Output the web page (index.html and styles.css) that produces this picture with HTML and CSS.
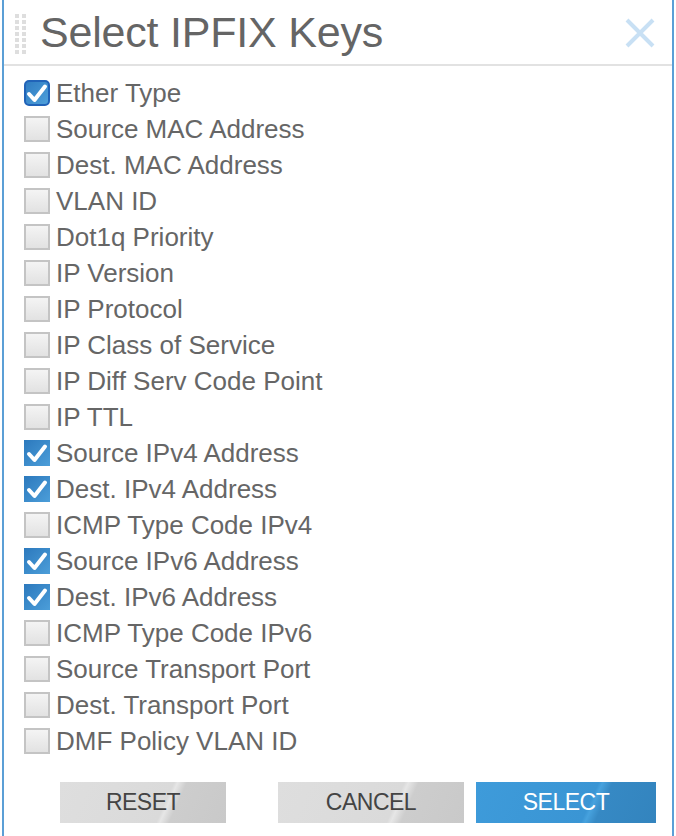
FILE: index.html
```html
<!DOCTYPE html>
<html lang="en">
<head>
  <meta charset="UTF-8">
  <title>Select IPFIX Keys</title>
  <link rel="stylesheet" href="styles.css">
</head>
<body>
  <div class="dialog">
    <header class="dialog-header">
      <svg class="grip" width="12" height="40" viewBox="0 0 12 40">
        <g fill="#dedede">
          <rect x="0" y="0" width="4" height="4"/><rect x="7" y="0" width="4" height="4"/>
          <rect x="0" y="6" width="4" height="4"/><rect x="7" y="6" width="4" height="4"/>
          <rect x="0" y="12" width="4" height="4"/><rect x="7" y="12" width="4" height="4"/>
          <rect x="0" y="18" width="4" height="4"/><rect x="7" y="18" width="4" height="4"/>
          <rect x="0" y="24" width="4" height="4"/><rect x="7" y="24" width="4" height="4"/>
          <rect x="0" y="30" width="4" height="4"/><rect x="7" y="30" width="4" height="4"/>
          <rect x="0" y="36" width="4" height="4"/><rect x="7" y="36" width="4" height="4"/>
        </g>
      </svg>
      <h1>Select IPFIX Keys</h1>
      <svg class="close-btn" width="32" height="32" viewBox="0 0 32 32">
        <path d="M3 3 L29 29 M29 3 L3 29" stroke="#c8e0f4" stroke-width="4" fill="none"/>
      </svg>
    </header>

    <ul class="key-list">
      <li class="key"><span class="box checked focus"><svg viewBox="0 0 26 26"><path d="M5 14 L10.5 20 L21 6.5" stroke="#fff" stroke-width="4" fill="none" stroke-linecap="round" stroke-linejoin="round"/></svg></span>Ether Type</li>
      <li class="key"><span class="box"></span>Source MAC Address</li>
      <li class="key"><span class="box"></span>Dest. MAC Address</li>
      <li class="key"><span class="box"></span>VLAN ID</li>
      <li class="key"><span class="box"></span>Dot1q Priority</li>
      <li class="key"><span class="box"></span>IP Version</li>
      <li class="key"><span class="box"></span>IP Protocol</li>
      <li class="key"><span class="box"></span>IP Class of Service</li>
      <li class="key"><span class="box"></span>IP Diff Serv Code Point</li>
      <li class="key"><span class="box"></span>IP TTL</li>
      <li class="key"><span class="box checked"><svg viewBox="0 0 26 26"><path d="M5 14 L10.5 20 L21 6.5" stroke="#fff" stroke-width="4" fill="none" stroke-linecap="round" stroke-linejoin="round"/></svg></span>Source IPv4 Address</li>
      <li class="key"><span class="box checked"><svg viewBox="0 0 26 26"><path d="M5 14 L10.5 20 L21 6.5" stroke="#fff" stroke-width="4" fill="none" stroke-linecap="round" stroke-linejoin="round"/></svg></span>Dest. IPv4 Address</li>
      <li class="key"><span class="box"></span>ICMP Type Code IPv4</li>
      <li class="key"><span class="box checked"><svg viewBox="0 0 26 26"><path d="M5 14 L10.5 20 L21 6.5" stroke="#fff" stroke-width="4" fill="none" stroke-linecap="round" stroke-linejoin="round"/></svg></span>Source IPv6 Address</li>
      <li class="key"><span class="box checked"><svg viewBox="0 0 26 26"><path d="M5 14 L10.5 20 L21 6.5" stroke="#fff" stroke-width="4" fill="none" stroke-linecap="round" stroke-linejoin="round"/></svg></span>Dest. IPv6 Address</li>
      <li class="key"><span class="box"></span>ICMP Type Code IPv6</li>
      <li class="key"><span class="box"></span>Source Transport Port</li>
      <li class="key"><span class="box"></span>Dest. Transport Port</li>
      <li class="key"><span class="box"></span>DMF Policy VLAN ID</li>
    </ul>

    <footer class="dialog-footer">
      <button class="btn btn-reset">RESET</button>
      <button class="btn btn-cancel">CANCEL</button>
      <button class="btn btn-select">SELECT</button>
    </footer>
  </div>
</body>
</html>
```

FILE: styles.css
```css
* {
  margin: 0;
  padding: 0;
  box-sizing: border-box;
}

body {
  font-family: 'Liberation Sans', Arial, sans-serif;
  background: #fff;
  color: #666;
}

.dialog {
  margin: 0 2px;
  height: 836px;
  border-left: 2px solid #5b9fd6;
  border-right: 2px solid #5b9fd6;
  background: #fff;
}

.dialog-header {
  display: flex;
  align-items: center;
  height: 66px;
  padding: 0 16px 0 11px;
  border-bottom: 2px solid #e2e2e2;
}

.grip {
  flex: none;
  margin-top: 4px;
}

.dialog-header h1 {
  flex: 1;
  margin-left: 13px;
  font-size: 43px;
  font-weight: normal;
  color: #656565;
  letter-spacing: -0.2px;
}

.close-btn {
  flex: none;
  margin-top: 1px;
}

.key-list {
  list-style: none;
  padding: 9px 0 0 20px;
}

.key {
  display: flex;
  align-items: center;
  height: 36px;
  font-size: 26px;
  color: #666;
}

.box {
  flex: none;
  width: 26px;
  height: 26px;
  margin-right: 6px;
  border: 2px solid #c4c4c4;
  background: linear-gradient(#f4f4f4, #e2e2e2);
}

.box svg {
  display: block;
  width: 100%;
  height: 100%;
}

.box.checked {
  border: none;
  background: linear-gradient(135deg, #2c79bd, #4c9ed9);
}

.box.focus {
  border: 2px solid #2163b8;
  border-radius: 5px;
  background: linear-gradient(135deg, #2f7cc2, #4fa0da);
}

.box.focus svg {
  margin: -2px;
  width: 26px;
  height: 26px;
}

.dialog-footer {
  display: flex;
  padding: 23px 0 0 56px;
}

.btn {
  height: 41px;
  border: none;
  font-family: 'Liberation Sans', Arial, sans-serif;
  font-size: 23px;
  color: #444;
  letter-spacing: -0.5px;
  background: linear-gradient(114deg, #dedede 0%, #dadada 62%, #e6e6e6 64%, #cdcdcd 69%, #c9c9c9 100%);
}

.btn-reset {
  width: 166px;
}

.btn-cancel {
  width: 186px;
  margin-left: 52px;
}

.btn-select {
  width: 180px;
  margin-left: 12px;
  color: #fff;
  background: linear-gradient(114deg, #3e9bda 0%, #3a95d4 62%, #47a2de 64%, #3689c4 69%, #3384be 100%);
}
```
